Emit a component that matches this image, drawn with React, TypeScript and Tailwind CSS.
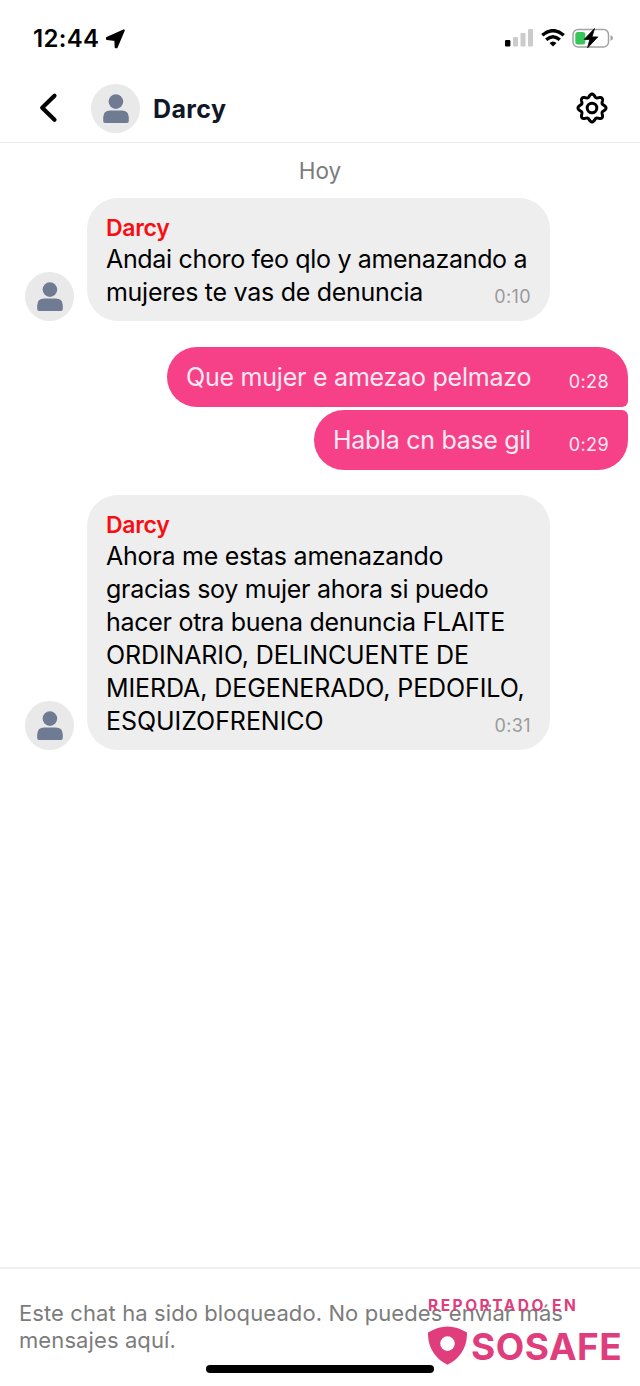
type Line = { text: string; tracking?: string };

type MessageProps = {
  lines: Line[];
  time: string;
  className?: string;
};

// eight rounded teeth around a 32x32 box
const gearPoints = Array.from({ length: 160 }, (_, i) => {
  const a = (i / 160) * Math.PI * 2;
  const r = 12.5 + 1.5 * Math.cos(8 * a);
  return `${(16 + r * Math.cos(a)).toFixed(2)},${(16 + r * Math.sin(a)).toFixed(2)}`;
}).join(" ");

function Avatar() {
  return (
    <div className="flex h-[49px] w-[49px] shrink-0 items-center justify-center rounded-full bg-[#e9e9ea]">
      <svg viewBox="0 0 49 49" className="h-full w-full" fill="#6f7a93">
        <circle cx="24.9" cy="17.6" r="7.3" />
        <path d="M12.200 37V33.500Q12.200 26.400 19.200 26.400H30.700Q37.800 26.400 37.800 33.500V37Q37.800 38.900 36 38.900H14Q12.200 38.900 12.200 37Z" />
      </svg>
    </div>
  );
}

function StatusBar() {
  return (
    <div className="flex h-[76px] items-center justify-between pl-[33px] pr-[26px]">
      <div className="flex items-center gap-[6px] pt-px">
        <span className="text-[24px] font-semibold leading-none tracking-[0.3px]">12:44</span>
        <svg viewBox="0 0 20 20" className="h-5 w-5" fill="#000" stroke="#000" strokeWidth="2" strokeLinejoin="round">
          <path d="M18.800 1.400 2 8.900V9.900L10.300 10.900 10.700 18.300H11.600Z" />
        </svg>
      </div>
      <div className="flex items-center">
        <svg viewBox="0 0 30 20" className="h-5 w-[30px]">
          <rect x="1" y="12" width="5.400" height="6.500" rx="1.300" fill="#000" />
          <rect x="9" y="9" width="5" height="9.500" rx="1.300" fill="#cbcbcc" />
          <rect x="16.500" y="5" width="5" height="13.500" rx="1.300" fill="#cbcbcc" />
          <rect x="24" y="1" width="5" height="17.500" rx="1.300" fill="#cbcbcc" />
        </svg>
        <svg viewBox="0 0 24 18" className="ml-[7px] h-[18px] w-6" fill="none" stroke="#000" strokeWidth="3.400">
          <path d="M1.300 6.300Q12-3 22.700 6.300" />
          <path d="M5.200 10.800Q12 4.700 18.800 10.800" />
          <path d="M8.500 14Q12 11 15.500 14L12 17.600Z" fill="#000" stroke="none" />
        </svg>
        <svg viewBox="0 0 42 22" className="ml-[7px] h-[22px] w-[42px]">
          <rect x="1" y="2.500" width="35.500" height="17.500" rx="5" fill="#fff" stroke="#a3a3a3" strokeWidth="1.500" />
          <path d="M38.500 8.300Q41 9 41 11T38.500 13.700Z" fill="#a3a3a3" />
          <rect x="3.300" y="5" width="10" height="12.500" rx="2.500" fill="#35c759" />
          <path d="M22.500 1.500 12.200 12.400H17.800L15.600 20.800 25.800 9.900H20Z" fill="#000" stroke="#000" strokeWidth="0.800" strokeLinejoin="round" />
        </svg>
      </div>
    </div>
  );
}

function Header() {
  return (
    <header className="flex h-[67px] items-center border-b border-[#ededed] pb-[2px] pl-[38px] pr-8">
      <svg viewBox="0 0 20 32" className="h-8 w-5" fill="none" stroke="#000" strokeWidth="4.200" strokeLinecap="round" strokeLinejoin="round">
        <path d="M16.500 3.700 4.200 15.700 16.500 27.700" />
      </svg>
      <div className="ml-[33px]">
        <Avatar />
      </div>
      <h1 className="ml-[13px] flex-1 pt-[3px] text-[25px] font-bold tracking-[0.4px] text-[#101828]">Darcy</h1>
      <svg viewBox="0 0 32 32" className="h-8 w-8" fill="none" stroke="#000" strokeWidth="3" strokeLinejoin="round">
        <circle cx="16" cy="16" r="4.800" />
        <polygon points={gearPoints} />
      </svg>
    </header>
  );
}

function IncomingMessage({ lines, time, className = "" }: MessageProps) {
  return (
    <div className={`flex items-end gap-[13px] pl-[25px] ${className}`}>
      <Avatar />
      <div className="flex w-[463px] items-end justify-between rounded-[31px] bg-[#eeeeee] pb-[12px] pl-[19px] pr-[19px] pt-[15px]">
        <div className="whitespace-nowrap text-[25px] leading-[33px]">
          <p className="text-[23px] font-semibold leading-[30px] tracking-[-0.3px] text-[#f80d12]">Darcy</p>
          {lines.map((line) => (
            <p key={line.text} className={line.tracking}>
              {line.text}
            </p>
          ))}
        </div>
        <span className="-ml-12 pb-[2px] text-[18px] leading-[20px] tracking-[0.4px] text-[#9a9a9a]">{time}</span>
      </div>
    </div>
  );
}

function OutgoingMessage({ lines, time, className = "" }: MessageProps) {
  return (
    <div className={`flex h-[60px] items-center justify-between self-end bg-[#f64188] pl-[19px] pr-[19px] text-[#ffeaf3] ${className}`}>
      <p className={`whitespace-nowrap text-[25px] leading-[33px] ${lines[0].tracking}`}>{lines[0].text}</p>
      <span className="pt-[9px] text-[18px] leading-[20px] tracking-[0.4px]">{time}</span>
    </div>
  );
}

function ReportBadge() {
  return (
    <div className="absolute left-[428px] top-[27px] w-[193px] text-[#df3d7c]">
      <p className="whitespace-nowrap text-[15.5px] font-bold leading-[20px] tracking-[2.5px]">REPORTADO EN</p>
      <div className="mt-[10px] flex items-start">
        <svg viewBox="0 0 39 39" className="h-[39px] w-[39px] shrink-0" fill="currentColor">
          <path fillRule="evenodd" d="M0 6.500Q19.500-5.500 39 6.500C39.500 22 31 33.500 19.500 38.700C8 33.500-.5 22 0 6.500ZM19.500 10.300a7.300 7.300 0 1 0 0 14.600a7.300 7.300 0 1 0 0-14.600Z" />
        </svg>
        <span className="ml-[4px] pt-px text-[37px] font-bold leading-[39px] tracking-[0.5px]">SOSAFE</span>
      </div>
    </div>
  );
}

const firstMessage: Line[] = [
  { text: "Andai choro feo qlo y amenazando a", tracking: "tracking-[-0.33px]" },
  { text: "mujeres te vas de denuncia", tracking: "tracking-[-0.28px]" },
];

const lastMessage: Line[] = [
  { text: "Ahora me estas amenazando", tracking: "tracking-[-0.25px]" },
  { text: "gracias soy mujer ahora si puedo", tracking: "tracking-[-0.28px]" },
  { text: "hacer otra buena denuncia FLAITE", tracking: "tracking-[-0.28px]" },
  { text: "ORDINARIO, DELINCUENTE DE", tracking: "tracking-[-0.12px]" },
  { text: "MIERDA, DEGENERADO, PEDOFILO,", tracking: "tracking-[-0.1px]" },
  { text: "ESQUIZOFRENICO", tracking: "tracking-[-0.05px]" },
];

export default function App() {
  return (
    <div className="flex h-[1386px] w-[640px] flex-col overflow-hidden bg-white font-['Inter',sans-serif] text-black">
      <StatusBar />
      <Header />
      <main className="flex flex-1 flex-col">
        <p className="mt-[13px] text-center text-[22.5px] leading-[30px] text-[#7c7c7c]">Hoy</p>
        <IncomingMessage className="mt-[12px]" lines={firstMessage} time="0:10" />
        <OutgoingMessage
          className="mr-[12px] mt-[26px] w-[461px] rounded-[30px] rounded-br-[6px]"
          lines={[{ text: "Que mujer e amezao pelmazo", tracking: "tracking-[-0.23px]" }]}
          time="0:28"
        />
        <OutgoingMessage
          className="mr-[12px] mt-[3px] w-[314px] rounded-[30px] rounded-tr-[6px]"
          lines={[{ text: "Habla cn base gil", tracking: "tracking-[-0.3px]" }]}
          time="0:29"
        />
        <IncomingMessage className="mt-[25.4px]" lines={lastMessage} time="0:31" />
      </main>
      <footer className="relative h-[119px] border-t-2 border-[#efefef] pl-[19px] pt-[31px]">
        <div className="whitespace-nowrap text-[22px] leading-[27px] tracking-[0.1px] text-[#7c7c7c]">
          <p>Este chat ha sido bloqueado. No puedes enviar más</p>
          <p>mensajes aquí.</p>
        </div>
        <ReportBadge />
        <div className="absolute left-[206px] top-[96px] h-2 w-[228px] rounded-full bg-black" />
      </footer>
    </div>
  );
}
